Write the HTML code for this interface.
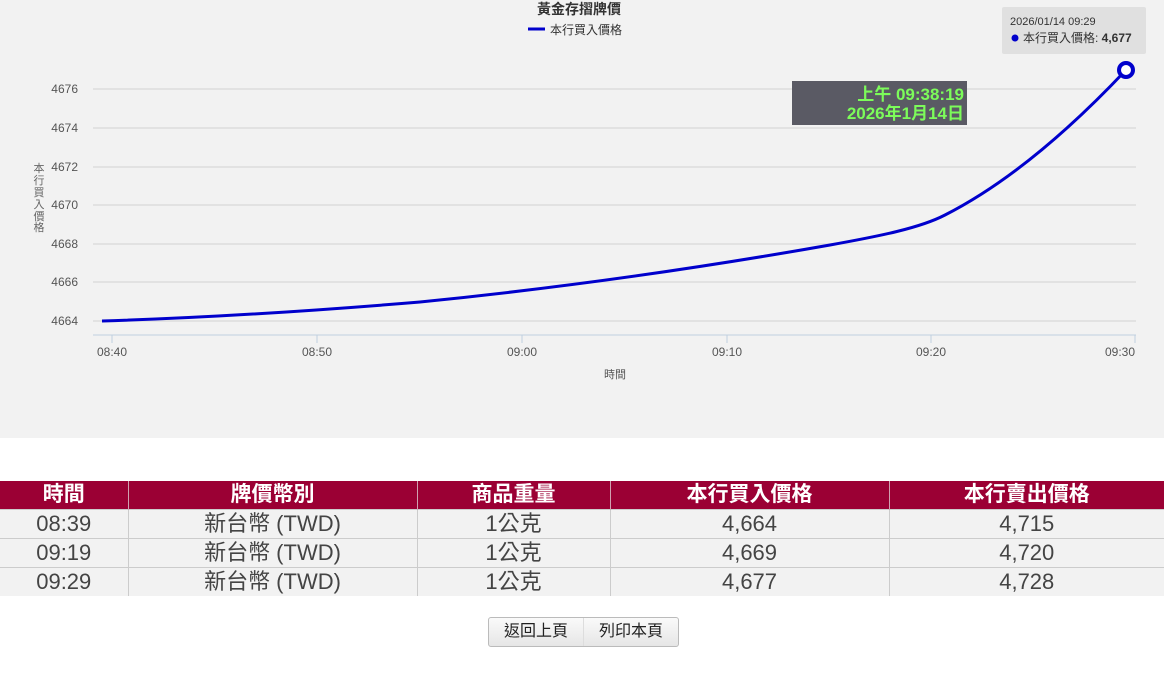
<!DOCTYPE html>
<html><head><meta charset="utf-8"><style>
body{margin:0;background:#fff;width:1164px;height:686px;overflow:hidden;font-family:"Liberation Sans","Noto Sans CJK TC",sans-serif}
#chart{position:absolute;left:0;top:0;width:1164px;height:438px;background:#f2f2f2}
table{position:absolute;left:0;top:481px;width:1164px;border-collapse:collapse;table-layout:fixed;font-size:22px;color:#444}
th{background:#9b0034;color:#fff;height:28px;padding:0;font-size:21px;font-weight:600;border-left:1px solid #d0a0b0;line-height:28px}
td{background:#f2f2f2;height:28px;padding:0;text-align:center;border-top:1px solid #ccc;border-left:1px solid #ccc;line-height:28px}
th:first-child,td:first-child{border-left:none}
.btns{position:absolute;left:488px;top:617px;width:189px;height:28px;border:1px solid #bbb;border-radius:3px;background:linear-gradient(#fafafa,#e6e6e6);font-size:16px;color:#222;display:flex}
.btns span{flex:1;text-align:center;line-height:28px}
.btns span+span{border-left:1px solid #ddd}
</style></head><body>
<div id="chart">
<svg width="1164" height="438" xmlns="http://www.w3.org/2000/svg" font-family="Liberation Sans, Noto Sans CJK TC, sans-serif">
<text x="579" y="14" text-anchor="middle" font-size="14" fill="#333" font-weight="bold">黃金存摺牌價</text>
<line x1="528" y1="29" x2="545" y2="29" stroke="#00c" stroke-width="3"/>
<text x="550" y="34" font-size="12" fill="#333">本行買入價格</text>
<g stroke="#ddd" stroke-width="1.5">
<line x1="93" y1="89" x2="1136" y2="89"/><line x1="93" y1="128" x2="1136" y2="128"/><line x1="93" y1="167" x2="1136" y2="167"/><line x1="93" y1="205" x2="1136" y2="205"/><line x1="93" y1="244" x2="1136" y2="244"/><line x1="93" y1="282" x2="1136" y2="282"/><line x1="93" y1="321" x2="1136" y2="321"/>
</g>
<line x1="93" y1="335" x2="1136" y2="335" stroke="#c0d0e0" stroke-width="1"/>
<g stroke="#c0d0e0"><line x1="112" y1="335" x2="112" y2="343"/><line x1="317" y1="335" x2="317" y2="343"/><line x1="522" y1="335" x2="522" y2="343"/><line x1="727" y1="335" x2="727" y2="343"/><line x1="931" y1="335" x2="931" y2="343"/><line x1="1135" y1="335" x2="1135" y2="343"/></g>
<g font-size="12" fill="#555" text-anchor="end">
<text x="78" y="93">4676</text><text x="78" y="132">4674</text><text x="78" y="171">4672</text><text x="78" y="209">4670</text><text x="78" y="248">4668</text><text x="78" y="286">4666</text><text x="78" y="325">4664</text>
</g>
<g font-size="12" fill="#555" text-anchor="middle">
<text x="112" y="356">08:40</text><text x="317" y="356">08:50</text><text x="522" y="356">09:00</text><text x="727" y="356">09:10</text><text x="931" y="356">09:20</text><text x="1120" y="356">09:30</text>
<text x="615" y="378" font-size="11">時間</text>
</g>
<g font-size="11" fill="#666" text-anchor="middle"><text x="39" y="172">本</text><text x="39" y="184">行</text><text x="39" y="196">買</text><text x="39" y="208">入</text><text x="39" y="220">價</text><text x="39" y="231">格</text></g>
<path d="M102,321 C200,318 300,312 420,302 C560,288 700,268 830,245 C880,236 920,228 945,215 C1000,187 1060,140 1126,70" fill="none" stroke="#00c" stroke-width="3"/>
<circle cx="1126" cy="70" r="7" fill="#fff" stroke="#00c" stroke-width="4"/>
<rect x="792" y="81" width="175" height="44" fill="#5a5a64"/>
<text x="964" y="100" text-anchor="end" font-size="17" fill="#7cfc5a" font-weight="bold">上午 09:38:19</text>
<text x="964" y="119" text-anchor="end" font-size="17" fill="#7cfc5a" font-weight="bold">2026年1月14日</text>
<rect x="1002" y="7" width="144" height="47" rx="2" fill="#e0e0e0"/>
<text x="1010" y="25" font-size="11" fill="#333">2026/01/14 09:29</text>
<circle cx="1015" cy="38" r="3.5" fill="#00c"/>
<text x="1023" y="42" font-size="12" fill="#333">本行買入價格: <tspan font-weight="bold">4,677</tspan></text>
</svg>
</div>
<table>
<colgroup><col style="width:128px"><col style="width:289px"><col style="width:193px"><col style="width:279px"><col></colgroup>
<tr><th>時間</th><th>牌價幣別</th><th>商品重量</th><th>本行買入價格</th><th>本行賣出價格</th></tr>
<tr><td>08:39</td><td>新台幣 (TWD)</td><td>1公克</td><td>4,664</td><td>4,715</td></tr>
<tr><td>09:19</td><td>新台幣 (TWD)</td><td>1公克</td><td>4,669</td><td>4,720</td></tr>
<tr><td>09:29</td><td>新台幣 (TWD)</td><td>1公克</td><td>4,677</td><td>4,728</td></tr>
</table>
<div class="btns"><span>返回上頁</span><span>列印本頁</span></div>
</body></html>
